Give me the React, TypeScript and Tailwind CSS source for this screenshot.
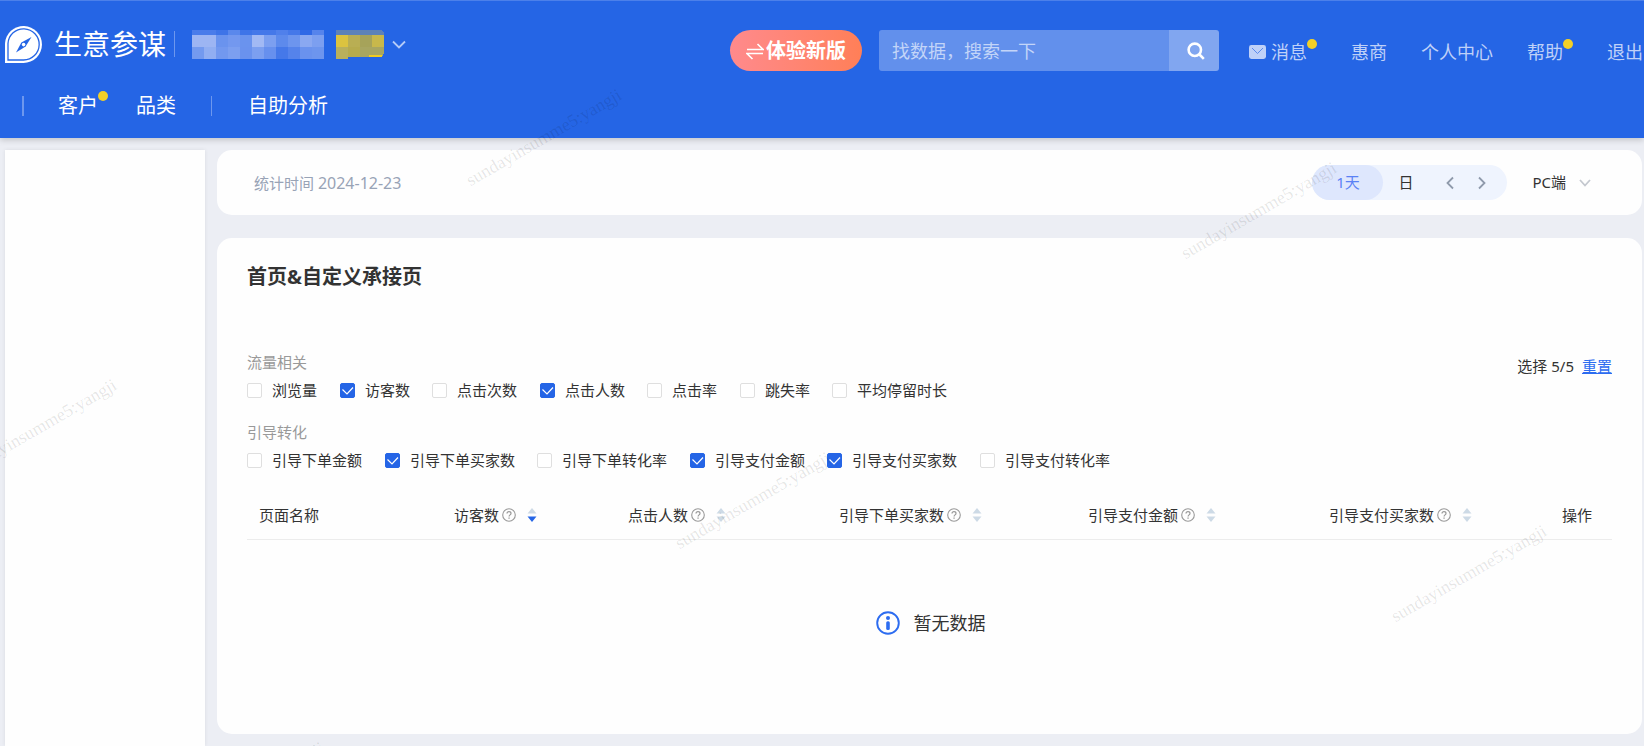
import React, { useState } from 'react';

interface Metric {
  id: string;
  label: string;
}

interface Column {
  label: string;
  width: string;
  sort?: 'none' | 'desc';
}

const TRAFFIC: Metric[] = [
  { id: 'pv', label: '浏览量' },
  { id: 'uv', label: '访客数' },
  { id: 'clicks', label: '点击次数' },
  { id: 'clickUsers', label: '点击人数' },
  { id: 'clickRate', label: '点击率' },
  { id: 'bounceRate', label: '跳失率' },
  { id: 'avgStay', label: '平均停留时长' },
];

const CONVERSION: Metric[] = [
  { id: 'orderAmount', label: '引导下单金额' },
  { id: 'orderBuyers', label: '引导下单买家数' },
  { id: 'orderRate', label: '引导下单转化率' },
  { id: 'payAmount', label: '引导支付金额' },
  { id: 'payBuyers', label: '引导支付买家数' },
  { id: 'payRate', label: '引导支付转化率' },
];

const DEFAULT_SELECTED = ['uv', 'clickUsers', 'orderBuyers', 'payAmount', 'payBuyers'];
const MAX_SELECTED = 5;

const COLUMNS: Column[] = [
  { label: '访客数', width: 'w-[189px]', sort: 'desc' },
  { label: '点击人数', width: 'w-[189px]', sort: 'none' },
  { label: '引导下单买家数', width: 'w-[256px]', sort: 'none' },
  { label: '引导支付金额', width: 'w-[234px]', sort: 'none' },
  { label: '引导支付买家数', width: 'w-[256px]', sort: 'none' },
  { label: '操作', width: 'w-[119px]' },
];

const WATERMARKS = [
  'left-[472px] top-[171px]',
  'left-[1187px] top-[244px]',
  'left-[-33px] top-[461px]',
  'left-[681px] top-[534px]',
  'left-[1397px] top-[607px]',
  'left-[175px] top-[824px]',
];

// Masked shop name, one array per row of cells
const MASK_ROWS = [
  { y: 0, h: 5, cells: ['#4a7cea', '#4a7cea', '#3e74e8', '#5a88ec', '#3e74e8', '#4578e9', '#4578e9', '#5080eb', '#4578e9', '#3069e6', '#5684ec'] },
  { y: 5, h: 12, cells: ['#9db5f3', '#9db5f3', '#6a93ee', '#7398ef', '#6a93ee', '#a2b9f4', '#7c9ff0', '#5d8aec', '#6d95ee', '#8aa8f1', '#7c9ff0'] },
  { y: 17, h: 12, cells: ['#749aef', '#91aef2', '#7298ef', '#7c9ff0', '#6a92ee', '#7c9ff0', '#6790ee', '#4578e9', '#5583eb', '#6a92ee', '#6d95ee'] },
];

const Logo = () => (
  <svg width="38" height="38" viewBox="0 0 38 38" aria-hidden="true" className="shrink-0">
    <path d="M0 38V18.5A18.5 18.5 0 1 1 18.5 38Z" fill="#fff" />
    <path d="M3 35V18.5A15.6 15.6 0 1 1 18.5 35Z" fill="none" stroke="#2565e5" strokeWidth="1.3" />
    <path d="M26.5 12 20.6 21.6 11 27.5 16.4 17.6Z" fill="#2565e5" />
    <circle cx="18.6" cy="19.6" r="1.8" fill="#fff" />
  </svg>
);

const MaskedName = () => (
  <svg width="192" height="29" viewBox="0 0 192 29" aria-hidden="true" shapeRendering="crispEdges" className="shrink-0">
    {MASK_ROWS.map((row) =>
      row.cells.map((color, i) => (
        <rect key={`${row.y}-${i}`} x={i * 12} y={row.y} width="12" height={row.h} fill={color} />
      ))
    )}
    <path d="M144 0h45l3 3v2h-48z" fill="#5d82b8" />
    <path d="M144 5h12v12h-12z" fill="#dcc33f" />
    <path d="M156 5h12v12h-12z" fill="#b9ae53" />
    <path d="M168 5h12v12h-12z" fill="#a6a35a" />
    <path d="M180 5h12v12h-12z" fill="#c8b84b" />
    <path d="M144 17h12v12h-12z" fill="#b9b05c" />
    <path d="M156 17h12v10h-12z" fill="#b6ab4d" />
    <path d="M168 17h24v6l-2 4h-22z" fill="#a8a661" />
    <path d="M177 25h13v2h-13z" fill="#f0cc20" />
  </svg>
);

const Chevron = ({ d, className }: { d: string; className: string }) => (
  <svg width="14" height="14" viewBox="0 0 14 14" fill="none" stroke="currentColor" aria-hidden="true" className={className}>
    <path d={d} strokeWidth="1.8" />
  </svg>
);

const HelpIcon = () => (
  <svg width="14" height="14" viewBox="0 0 14 14" fill="none" stroke="#999" aria-hidden="true">
    <circle cx="7" cy="7" r="6.3" strokeWidth="1.1" />
    <path d="M5 5.6C5 4.3 5.8 3.6 7 3.6s2 .7 2 1.8c0 1.4-1.9 1.5-1.9 3" strokeWidth="1.2" />
    <path d="M6.4 9.4h1.3v1.3H6.4z" fill="#999" stroke="none" />
  </svg>
);

const SortIcon = ({ active }: { active: boolean }) => (
  <svg width="10" height="14" viewBox="0 0 10 14" aria-hidden="true">
    <path d="M5 0 9.5 5.5H.5Z" fill="#cddae6" />
    <path d="M5 14 9.5 8.5H.5Z" fill={active ? '#2565e6' : '#cddae6'} />
  </svg>
);

const Dot = ({ className = '' }: { className?: string }) => (
  <span className={`h-[10px] w-[10px] shrink-0 rounded-full bg-[#f3d027] ${className}`} />
);

const Header = () => (
  <header className="relative z-10 border-t border-[#4c80ea] bg-[#2565e5] pb-[5px] text-white shadow-[0_2px_6px_rgba(0,0,0,0.18)]">
    <div className="flex h-[78px] items-start justify-between pl-[5px] pr-px">
      <div className="mt-6 flex h-[38px] shrink-0 items-center">
        <Logo />
        <h1 className="ml-[11px] whitespace-nowrap text-[28px] leading-[38px]">生意参谋</h1>
        <span className="ml-2 h-[26px] w-px bg-[#6d97ee]" />
        <button type="button" aria-label="切换店铺" className="ml-[17px] flex items-center gap-2">
          <MaskedName />
          <Chevron d="M1 4.5 7 10.5 13 4.5" className="text-[#b5cbf7]" />
        </button>
      </div>

      <div className="mt-[29px] flex h-[41px] items-center">
        <button
          type="button"
          className="flex h-[41px] w-[132px] shrink-0 items-center justify-center rounded-full bg-linear-to-r from-[#ff8a8c] to-[#ff7f57] text-xl font-bold"
        >
          <svg width="18" height="18" viewBox="0 0 18 18" fill="none" stroke="currentColor" strokeWidth="1.6" aria-hidden="true" className="mr-[2px]">
            <path d="M1 7.5h16L11.5 2M17 11.5H1L6.5 17" />
          </svg>
          体验新版
        </button>

        <form role="search" onSubmit={(e) => e.preventDefault()} className="ml-[17px] flex h-[41px] overflow-hidden rounded-[3px]">
          <input
            type="text"
            aria-label="搜索"
            placeholder="找数据，搜索一下"
            className="w-[290px] min-w-0 bg-white/28 px-[13px] text-lg text-white outline-none placeholder:text-[#c3d5f8] placeholder:opacity-100"
          />
          <button type="submit" aria-label="搜索" className="flex w-[50px] shrink-0 items-center justify-center bg-white/42">
            <svg width="18" height="18" viewBox="0 0 18 18" fill="none" stroke="#fff" strokeWidth="2.6" aria-hidden="true" className="ml-1">
              <circle cx="7.8" cy="7.8" r="6.2" />
              <path d="m12 12 4.8 4.8" />
            </svg>
          </button>
        </form>

        <nav className="ml-[30px] flex shrink-0 items-center gap-[34px] whitespace-nowrap pt-[2px] text-lg leading-6 text-[#bfd1f8]">
          <a href="#messages" className="flex items-center">
            <svg width="17" height="14" viewBox="0 0 17 14" aria-hidden="true" className="mr-[5px]">
              <rect width="17" height="14" rx="2.4" fill="#bfd1f8" />
              <path d="m3 3 5.5 5.5L14 3" fill="none" stroke="#5c8bec" strokeWidth="1" />
            </svg>
            消息
            <Dot className="mb-4" />
          </a>
          <a href="#huishang">惠商</a>
          <a href="#account">个人中心</a>
          <a href="#help" className="flex items-center">
            帮助
            <Dot className="mb-4" />
          </a>
          <a href="#logout">退出</a>
        </nav>
      </div>
    </div>

    <nav className="flex h-[54px] items-center whitespace-nowrap pl-[22px] text-xl leading-7">
      <span className="h-5 w-[2px] bg-[#6d97ee]" />
      <a href="#customers" className="ml-[34px] flex items-center">
        客户
        <Dot className="mb-5" />
      </a>
      <a href="#category" className="ml-7">品类</a>
      <span className="ml-[35px] h-5 w-px bg-[#6d97ee]" />
      <a href="#analysis" className="ml-9">自助分析</a>
    </nav>
  </header>
);

const DateBar = () => (
  <section className="flex h-[65px] items-center justify-between rounded-[15px] bg-[#fefefe] pl-[37px] pr-[50px]">
    <p className="text-[15px] text-[#98a3b6]">
      统计时间 <time dateTime="2024-12-23" className="text-base">2024-12-23</time>
    </p>
    <div className="flex items-center text-[15px]">
      <div className="flex h-[35px] items-center rounded-full bg-[#eff4fe]">
        <button type="button" className="h-[35px] w-[71px] rounded-full bg-[#dee7fd] text-[#5a82f5]">1天</button>
        <button type="button" className="w-[45px]">日</button>
        <button type="button" aria-label="前一天" className="ml-[15px]">
          <Chevron d="M10 1.5 4.5 7 10 12.5" className="text-[#8f9aac]" />
        </button>
        <button type="button" aria-label="后一天" className="ml-[18px] mr-[18px]">
          <Chevron d="M4 1.5 9.5 7 4 12.5" className="text-[#8f9aac]" />
        </button>
      </div>
      <button type="button" aria-haspopup="listbox" className="ml-[25px] flex items-center gap-3">
        PC端
        <Chevron d="M2 4 7 9.5 12 4" className="text-[#c4c8cf]" />
      </button>
    </div>
  </section>
);

interface MetricGroupProps {
  title: string;
  items: Metric[];
  selected: string[];
  onToggle: (id: string) => void;
}

const MetricGroup: React.FC<MetricGroupProps> = ({ title, items, selected, onToggle }) => (
  <fieldset>
    <legend className="text-[#999] leading-7">{title}</legend>
    <div className="flex flex-wrap leading-7">
      {items.map((item) => (
        <label key={item.id} className="flex cursor-pointer items-center whitespace-nowrap odd:mr-[23px] even:mr-[22px]">
          <span className="relative mr-[10px] h-[15px] w-[15px]">
            <input
              type="checkbox"
              checked={selected.includes(item.id)}
              onChange={() => onToggle(item.id)}
              className="peer block h-[15px] w-[15px] appearance-none rounded-[2px] border border-[#dfdfdf] bg-white checked:border-[#2565e6] checked:bg-[#2565e6]"
            />
            <svg
              viewBox="0 0 15 15"
              fill="none"
              stroke="#fff"
              aria-hidden="true"
              className="pointer-events-none absolute inset-0 hidden h-[15px] w-[15px] peer-checked:block"
            >
              <path d="m2.5 6.5 4.5 4.5 6-6.5" strokeWidth="1.2" />
            </svg>
          </span>
          {item.label}
        </label>
      ))}
    </div>
  </fieldset>
);

const ReportTable = () => (
  <table className="mt-[18px] w-full table-fixed border-collapse">
    <thead>
      <tr className="h-[47px] border-b border-[#ececec]">
        <th scope="col" className="pl-3 text-left font-normal">页面名称</th>
        {COLUMNS.map((col) => (
          <th key={col.label} scope="col" className={`whitespace-nowrap pr-5 font-normal ${col.width}`}>
            <div className="flex items-center justify-end">
              {col.label}
              {col.sort && (
                <>
                  <span className="ml-[3px]"><HelpIcon /></span>
                  <button type="button" aria-label={`按${col.label}排序`} className="ml-[11px] mr-px">
                    <SortIcon active={col.sort === 'desc'} />
                  </button>
                </>
              )}
            </div>
          </th>
        ))}
      </tr>
    </thead>
    <tbody>
      <tr>
        <td colSpan={COLUMNS.length + 1} className="py-[69px]">
          <div className="flex items-center justify-center gap-[14px] pl-[2px] text-lg leading-7">
            <svg width="24" height="24" viewBox="0 0 24 24" aria-hidden="true">
              <circle cx="12" cy="12" r="10.8" fill="none" stroke="#2c6cf0" strokeWidth="1.9" />
              <circle cx="12" cy="7" r="2" fill="#2c6cf0" />
              <rect x="10.2" y="10.2" width="3.6" height="8.8" rx="1.5" fill="#2c6cf0" />
            </svg>
            暂无数据
          </div>
        </td>
      </tr>
    </tbody>
  </table>
);

const Watermarks = () => (
  <div aria-hidden="true" className="pointer-events-none absolute inset-0 z-20 overflow-hidden">
    {WATERMARKS.map((pos) => (
      <span
        key={pos}
        className={`absolute origin-bottom-left -rotate-[30deg] whitespace-nowrap font-['Liberation_Serif',serif] text-lg leading-none text-black/10 ${pos}`}
      >
        sundayinsumme5:yangji
      </span>
    ))}
  </div>
);

export default function App() {
  const [selected, setSelected] = useState<string[]>(DEFAULT_SELECTED);

  const toggle = (id: string) => {
    setSelected((prev) => {
      if (prev.includes(id)) return prev.filter((s) => s !== id);
      return prev.length < MAX_SELECTED ? [...prev, id] : prev;
    });
  };

  return (
    <div className="relative flex min-h-screen flex-col overflow-hidden bg-[#eceef4] font-['Noto_Sans','Noto_Sans_CJK_SC',sans-serif] text-[15px] text-[#333]">
      <Header />

      <div className="flex flex-1 gap-3 pl-[5px] pr-[2px] pt-3">
        <aside className="w-[200px] shrink-0 bg-[#fefefe] shadow-[0_0_4px_rgba(0,0,0,0.08)]" />

        <main className="flex min-w-0 flex-1 flex-col gap-[23px] pb-3">
          <DateBar />

          <section className="flex-1 rounded-[15px] bg-[#fefefe] px-[30px] pt-6">
            <h2 className="text-xl font-bold leading-[30px]">首页&amp;自定义承接页</h2>

            <div className="mt-14 flex items-start justify-between">
              <div className="flex flex-col gap-[14px]">
                <MetricGroup title="流量相关" items={TRAFFIC} selected={selected} onToggle={toggle} />
                <MetricGroup title="引导转化" items={CONVERSION} selected={selected} onToggle={toggle} />
              </div>
              <p className="mt-1 whitespace-nowrap leading-7">
                选择 {selected.length}/{MAX_SELECTED}
                <button
                  type="button"
                  onClick={() => setSelected(DEFAULT_SELECTED)}
                  className="ml-2 cursor-pointer text-[#2c6cf0] underline"
                >
                  重置
                </button>
              </p>
            </div>

            <ReportTable />
          </section>
        </main>
      </div>

      <Watermarks />
    </div>
  );
}
